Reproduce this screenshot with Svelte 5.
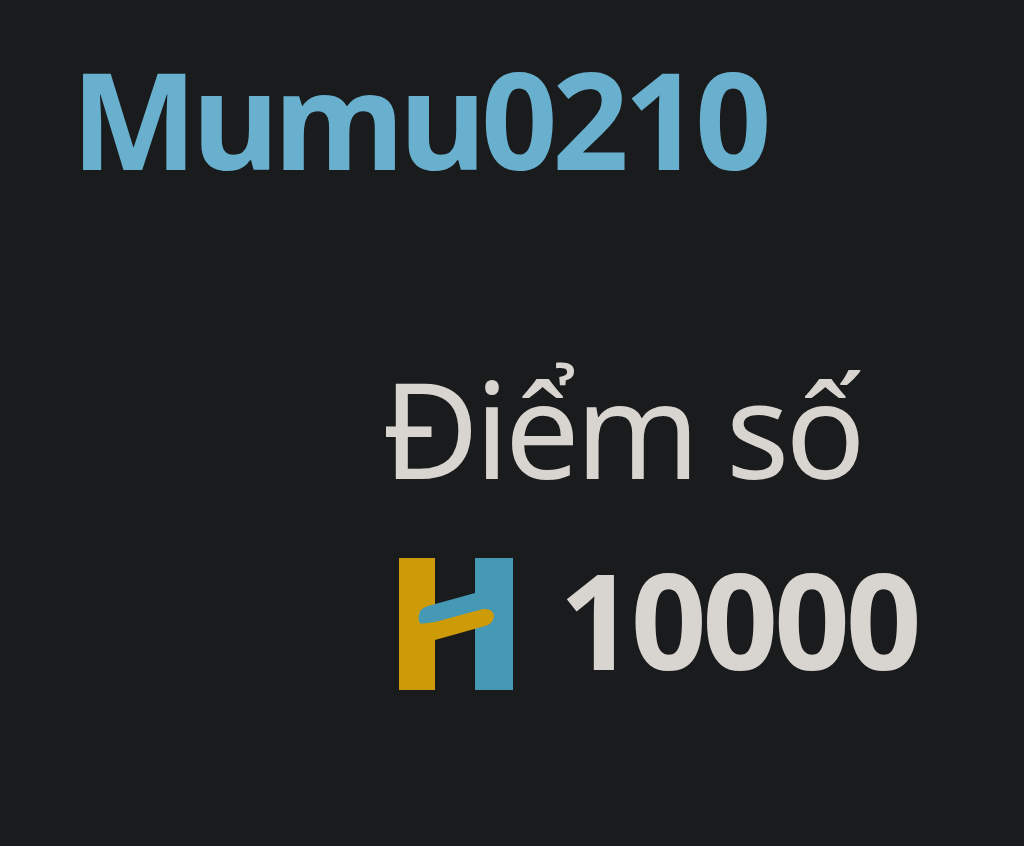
<script>
    let username = 'Mumu0210';
    let label = 'Điểm số';
    let score = $state(10000);
</script>

<main class="profile">
    <h1 class="username">{username}</h1>

    <section class="score">
        <div class="label">{label}</div>
        <div class="points">
            <svg class="logo" viewBox="0 0 114 132" aria-hidden="true">
                <path d="M0 0H36V132H0Z" fill="#cd9a08" />
                <path d="M76 0H114V132H76V62L26 68Q18 66 20 57Q20 51 29 48L76 35Z" fill="#4599b5" />
                <path d="M20 66L36 64L84 51Q94 50 95 58Q94 66 86 68L36 82L20 84Z" fill="#cd9a08" />
            </svg>
            <span class="value">{score}</span>
        </div>
    </section>
</main>

<style>
    :global(body) {
        margin: 0;
        background: #1a1b1c;
    }
    .profile {
        box-sizing: border-box;
        height: 846px;
        padding: 28px 0 0 71px;
        overflow: hidden;
        font-family: "Noto Sans", sans-serif;
        white-space: nowrap;
    }
    .username {
        margin: 0;
        color: #68b0ce;
        font-size: 134px;
        line-height: 180px;
        font-weight: 700;
        letter-spacing: -5.3px;
    }
    .score {
        padding: 130px 0 0 311px;
        color: #d8d4cf;
    }
    .label {
        font-size: 133px;
        line-height: 180px;
        letter-spacing: -4.3px;
    }
    .points {
        display: flex;
        align-items: center;
        padding: 11px 0 0 17px;
    }
    .logo {
        width: 114px;
        height: 132px;
        margin-top: 10px;
    }
    .value {
        margin-left: 46px;
        font-size: 133px;
        line-height: 180px;
        font-weight: 700;
        letter-spacing: -4.4px;
    }
</style>
